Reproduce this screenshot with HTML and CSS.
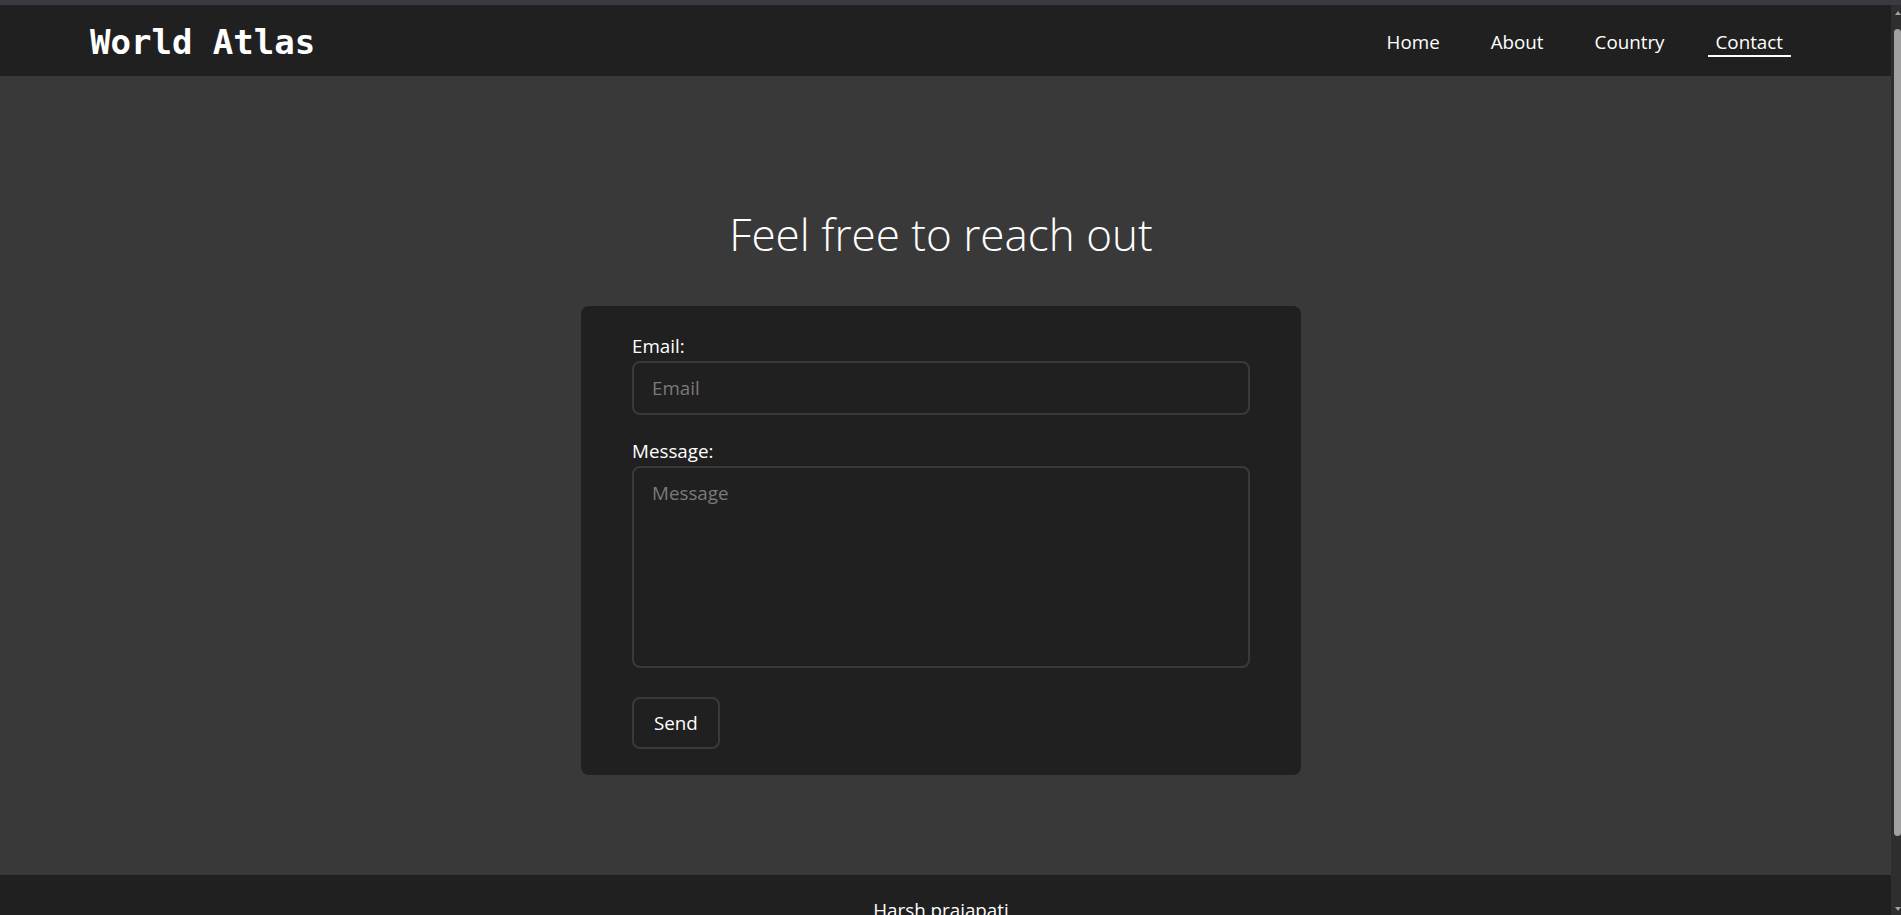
FILE: index.html
```html
<!DOCTYPE html>
<html lang="en">
<head>
<meta charset="utf-8">
<title>World Atlas - Contact</title>
<link rel="stylesheet" href="styles.css">
</head>
<body>
<header class="site-header">
  <div class="logo">World Atlas</div>
  <nav class="nav">
    <a class="nav-link" href="#">Home</a>
    <a class="nav-link" href="#">About</a>
    <a class="nav-link" href="#">Country</a>
    <a class="nav-link active" href="#">Contact</a>
  </nav>
</header>
<main class="contact">
  <h1 class="contact-title">Feel free to reach out</h1>
  <form class="contact-card">
    <label class="field-label" for="email">Email:</label>
    <input class="field-input" id="email" type="email" placeholder="Email">
    <label class="field-label" for="message">Message:</label>
    <textarea class="field-input field-area" id="message" placeholder="Message"></textarea>
    <button class="send-btn" type="button">Send</button>
  </form>
</main>
<footer class="site-footer">Harsh prajapati</footer>
<div class="scrollbar" aria-hidden="true">
  <span class="scroll-arrow up"></span>
  <span class="scroll-thumb"></span>
  <span class="scroll-arrow down"></span>
</div>
</body>
</html>
```
FILE: styles.css
```css
html {
  background: #393939;
}

* {
  box-sizing: border-box;
}

body {
  margin: 0;
  background: #393939;
  color: #ffffff;
  font-family: "Open Sans", "Noto Sans", sans-serif;
  font-size: 18.8px;
}

.site-header {
  box-sizing: content-box;
  height: 71px;
  border-top: 5px solid #3b3a40;
  background: #202020;
  display: flex;
  align-items: center;
  justify-content: space-between;
  padding: 0 110px 0 90px;
}

.logo {
  font-family: "DejaVu Sans Mono", "Liberation Mono", monospace;
  font-weight: 700;
  font-size: 34px;
  margin-top: 2px;
}

.nav {
  display: flex;
  gap: 35px;
  margin-top: 2px;
}

.nav-link {
  color: #ffffff;
  text-decoration: none;
  padding: 4px 8px 0;
  border-bottom: 2px solid transparent;
  line-height: 25.6px;
}

.nav-link.active {
  border-bottom-color: #ffffff;
}

.contact {
  padding: 128px 19px 100px 0;
}

.contact-title {
  margin: 0 0 42px;
  text-align: center;
  font-size: 44px;
  font-weight: 300;
  line-height: 60px;
}

.contact-card {
  width: 720px;
  margin: 0 auto;
  padding: 28px 51px 26px;
  background: #202020;
  border-radius: 8px;
  display: flex;
  flex-direction: column;
}

.field-label {
  line-height: 25px;
  margin-bottom: 2px;
}

.field-input {
  display: block;
  width: 100%;
  height: 54px;
  margin-bottom: 24px;
  padding: 0 18px;
  background: #202020;
  border: 2px solid #3a3a3a;
  border-radius: 8px;
  color: #ffffff;
  font-family: inherit;
  font-size: 18.8px;
  outline: none;
}

.field-input::placeholder {
  color: #7a7a7a;
}

.field-area {
  height: 202px;
  margin-bottom: 29px;
  padding: 12px 18px;
  resize: none;
  line-height: 26px;
}

.send-btn {
  align-self: flex-start;
  height: 52px;
  padding: 0 20px;
  background: #202020;
  border: 2px solid #3a3a3a;
  border-radius: 8px;
  color: #ffffff;
  font-family: inherit;
  font-size: 18.8px;
}

.site-footer {
  background: #202020;
  padding: 22px 19px 30px 0;
  text-align: center;
  line-height: 26px;
}

/* window scrollbar, drawn over the right edge of the page */
.scrollbar {
  position: fixed;
  top: 5px;
  right: 0;
  bottom: 0;
  width: 10px;
  background: #2e2e2e;
  display: flex;
  flex-direction: column;
  align-items: center;
  padding: 6px 0 4px 3px;
}

.scroll-arrow {
  width: 0;
  height: 0;
  border-left: 3px solid transparent;
  border-right: 3px solid transparent;
}

.scroll-arrow.up {
  border-bottom: 4px solid #a0a0a0;
}

.scroll-arrow.down {
  margin-top: auto;
  border-top: 4px solid #a0a0a0;
}

.scroll-thumb {
  width: 7px;
  height: 807px;
  margin-top: 14px;
  background: #a0a0a0;
  border-radius: 4px;
}
```
